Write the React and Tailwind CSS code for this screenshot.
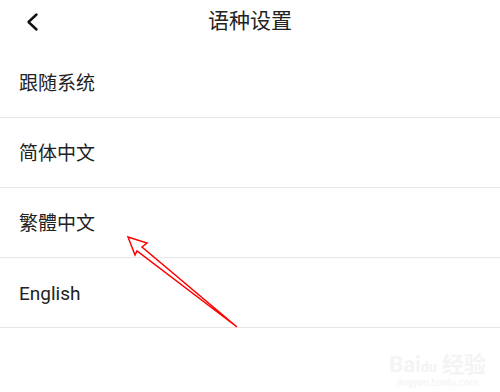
import React from "react";

const items = ["跟随系统", "简体中文", "繁體中文", "English"];

const App = () => {
  return (
    <div
      className="relative w-[500px] h-[392px] bg-white overflow-hidden text-[#222]"
      style={{ fontFamily: '"Roboto", "Noto Sans CJK SC", sans-serif' }}
    >
      {/* Header */}
      <div className="relative h-12 flex justify-center pt-[6px]">
        <svg className="absolute left-[24px] top-[12px]" width="18" height="20" viewBox="0 0 18 20">
          <path d="M12.5 2.5 L4.5 10 L12.5 17.5" fill="none" stroke="#111" strokeWidth="2.4" strokeLinecap="round" strokeLinejoin="round" />
        </svg>
        <h1 className="text-[21px] leading-[30px]">语种设置</h1>
      </div>

      {/* Options */}
      {items.map((item) => (
        <div key={item} className="h-[70px] flex items-center pt-[4px] px-[19px] border-b border-[#e6e6e6]">
          <span className="text-[19px]">{item}</span>
        </div>
      ))}

      {/* Red annotation arrow */}
      <svg className="absolute left-0 top-0 pointer-events-none" width="500" height="392">
        <polygon
          points="128,237 147,243 142,247 237,327 137,251 135,255"
          fill="none"
          stroke="#ff0000"
          strokeWidth="1.5"
          strokeLinejoin="miter"
        />
      </svg>

      {/* watermark */}
      <div className="absolute right-[14px] bottom-[4px] text-[#f4f4f4] text-center leading-none select-none">
        <div className="text-[22px] font-bold">Bai<span className="text-[14px]">du</span> 经验</div>
        <div className="text-[10px] mt-[2px]">jingyan.baidu.com</div>
      </div>
    </div>
  );
};

export default App;
